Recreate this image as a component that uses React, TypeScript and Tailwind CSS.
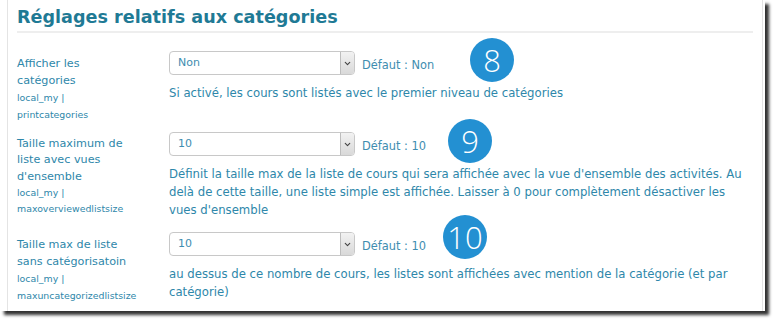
import { ChevronDown } from "lucide-react";

const font = { fontFamily: '"DejaVu Sans", Verdana, sans-serif' };

function Select({ value }: { value: string }) {
  return (
    <div className="flex h-[24px] w-[186px] overflow-hidden rounded-[4px] border border-[#c8c8c8] bg-white">
      <div className="flex flex-1 items-center pl-[8px] text-[11px] text-[#3e8db0]">{value}</div>
      <div className="flex w-[14px] items-center justify-center border-l border-[#bdbdbd] bg-gradient-to-b from-[#f2f2f2] to-[#d9d9d9]">
        <ChevronDown className="h-[9px] w-[9px] text-[#444]" strokeWidth={3} />
      </div>
    </div>
  );
}

function Badge({ n, className }: { n: string; className: string }) {
  return (
    <div
      className={`absolute flex h-[44px] w-[44px] items-center justify-center rounded-full bg-[#2390d2] text-[31px] font-extralight leading-none text-white ${className}`}
      style={{ fontFamily: '"Open Sans", Lato, sans-serif' }}
    >
      {n}
    </div>
  );
}

type Row = {
  label: string[];
  keys: string[];
  value: string;
  def: string;
  desc: string;
  badge: string;
  badgePos: string;
  lead: string;
  className: string;
};

const rows: Row[] = [
  {
    label: ["Afficher les", "catégories"],
    keys: ["local_my |", "printcategories"],
    value: "Non",
    def: "Défaut : Non",
    desc: "Si activé, les cours sont listés avec le premier niveau de catégories",
    badge: "8",
    badgePos: "left-[301px] top-[-13px]",
    lead: "leading-[17px]",
    className: "mt-[18px]",
  },
  {
    label: ["Taille maximum de", "liste avec vues", "d'ensemble"],
    keys: ["local_my |", "maxoverviewedlistsize"],
    value: "10",
    def: "Défaut : 10",
    desc: "Définit la taille max de la liste de cours qui sera affichée avec la vue d'ensemble des activités. Au delà de cette taille, une liste simple est affichée. Laisser à 0 pour complètement désactiver les vues d'ensemble",
    badge: "9",
    badgePos: "left-[279px] top-[-13px]",
    lead: "leading-[16.3px]",
    className: "mt-[9px]",
  },
  {
    label: ["Taille max de liste", "sans catégorisatoin"],
    keys: ["local_my |", "maxuncategorizedlistsize"],
    value: "10",
    def: "Défaut : 10",
    desc: "au dessus de ce nombre de cours, les listes sont affichées avec mention de la catégorie (et par catégorie)",
    badge: "10",
    badgePos: "left-[274px] top-[-17px]",
    lead: "leading-[17px]",
    className: "mt-[13px]",
  },
];

export default function App() {
  return (
    <div className="h-[321px] w-[775px] overflow-hidden bg-white" style={font}>
      <div className="h-[311px] w-[765px] overflow-hidden bg-white shadow-[4px_4px_3px_rgba(0,0,0,0.8)]">
        <div className="ml-[7px] h-full w-[756px] border-x border-[#e4e4e4] pl-[9px] pr-[9px]">
          <h2 className="pt-[6px] text-[17.6px] font-bold leading-[22px] text-[#1f7a95]">
            Réglages relatifs aux catégories
          </h2>
          <div className="mt-[3px] h-[2px] bg-[#eeeeee]" />
          {rows.map((r) => (
            <div key={r.badge} className={`grid grid-cols-[152px_1fr] ${r.className}`}>
              <div className={`pt-[4px] text-[#2e87aa] ${r.lead}`}>
                {r.label.map((l) => (
                  <div key={l} className="text-[11.2px]">{l}</div>
                ))}
                {r.keys.map((k) => (
                  <div key={k} className="text-[9.4px]">{k}</div>
                ))}
              </div>
              <div className="relative">
                <div className="flex items-center gap-[7px]">
                  <Select value={r.value} />
                  <span className="pt-[6px] text-[11.4px] text-[#3e8db0]">{r.def}</span>
                </div>
                <Badge n={r.badge} className={r.badgePos} />
                <p className="mt-[9px] pr-[4px] text-[11.7px] leading-[18px] text-[#2e87aa]">{r.desc}</p>
              </div>
            </div>
          ))}
        </div>
      </div>
    </div>
  );
}
